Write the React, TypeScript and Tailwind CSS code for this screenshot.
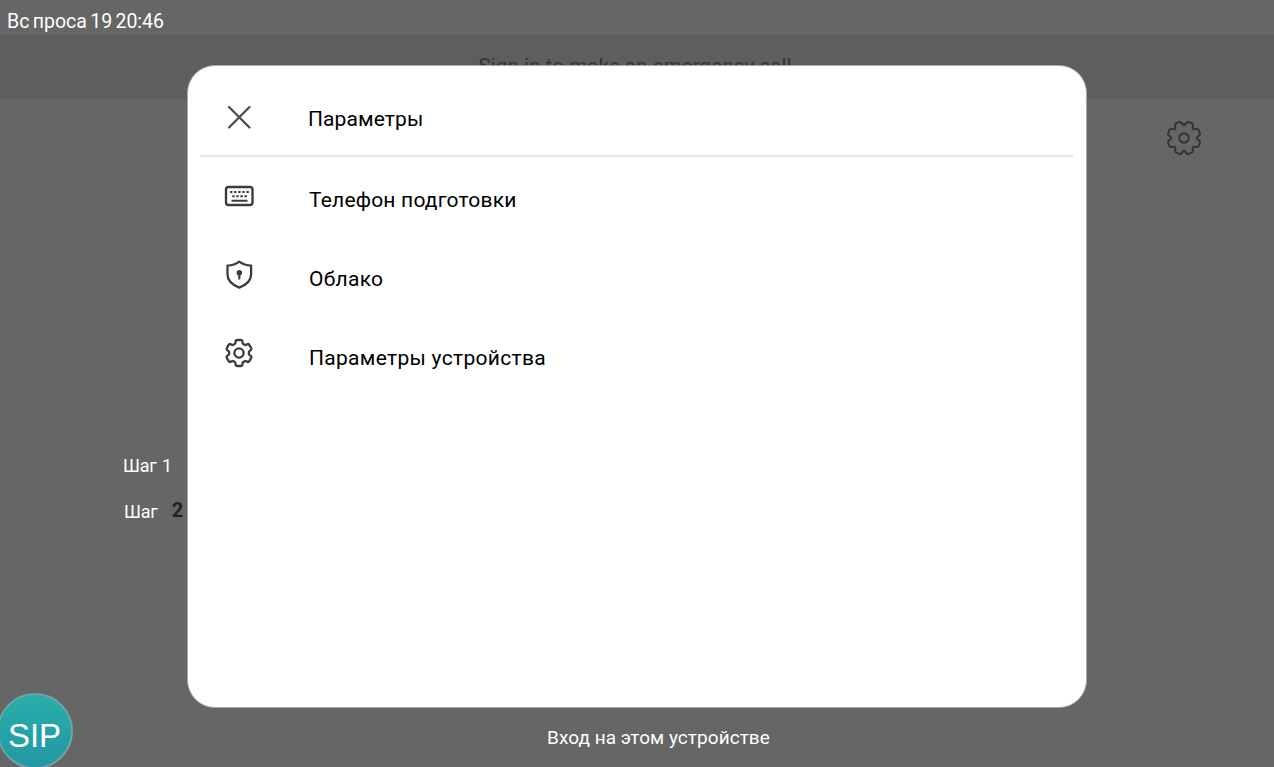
import type { ReactNode } from 'react';

interface GearProps {
  className: string;
  teeth: number;
  outer: number;
  inner: number;
  hole: number;
  // half widths of a tooth at its tip and at its root, in degrees
  tip: number;
  root: number;
  offset?: number;
  strokeWidth: number;
}

function gearPath({ teeth, outer, inner, tip, root, offset = 0 }: GearProps) {
  const points: number[][] = [];
  for (let i = 0; i < teeth; i++) {
    const mid = (360 / teeth) * i + offset - 90;
    [[-root, inner], [-tip, outer], [tip, outer], [root, inner]].forEach(([d, r]) => {
      const a = ((mid + d) * Math.PI) / 180;
      points.push([r * Math.cos(a), r * Math.sin(a)]);
    });
  }
  // soften every corner with a short curve
  const k = 0.26;
  return points
    .map((p, i) => {
      const prev = points[(i + points.length - 1) % points.length];
      const next = points[(i + 1) % points.length];
      const ax = p[0] + (prev[0] - p[0]) * k;
      const ay = p[1] + (prev[1] - p[1]) * k;
      const bx = p[0] + (next[0] - p[0]) * k;
      const by = p[1] + (next[1] - p[1]) * k;
      return `${i === 0 ? 'M' : 'L'}${ax} ${ay}Q${p[0]} ${p[1]} ${bx} ${by}`;
    })
    .join('') + 'Z';
}

function Gear(props: GearProps) {
  return (
    <svg viewBox="-18 -18 36 36" className={props.className} fill="none" stroke="currentColor" strokeWidth={props.strokeWidth} strokeLinejoin="round">
      <path d={gearPath(props)} />
      <circle r={props.hole} />
    </svg>
  );
}

function CloseIcon() {
  return (
    <svg viewBox="0 0 36 36" className="size-9" fill="none" stroke="currentColor" strokeWidth="2.4" strokeLinecap="round">
      <path d="M8 8l20.5 20.5M28.5 8L8 28.5" />
    </svg>
  );
}

function KeyboardIcon() {
  return (
    <svg viewBox="0 0 36 36" className="size-9" fill="none" stroke="currentColor">
      <rect x="5" y="10" width="26.5" height="18" rx="2.5" strokeWidth="2.4" />
      <path d="M9 15h19" strokeWidth="2" strokeDasharray="2.4 1.7" />
      <path d="M11.2 19.3h15" strokeWidth="2" strokeDasharray="2.4 1.7" />
      <path d="M10.5 23.7h16" strokeWidth="2" />
    </svg>
  );
}

function ShieldIcon() {
  return (
    <svg viewBox="0 0 36 36" className="size-9" fill="none" stroke="currentColor" strokeLinejoin="round">
      <path d="M18.3 5.7C15 8.2 11 9.5 6.5 9.7V18.3c0 6.2 4.6 10.6 11.8 13.3C25.5 28.9 30.1 24.5 30.1 18.3V9.7C25.6 9.5 21.6 8.2 18.3 5.7Z" strokeWidth="2.3" />
      <circle cx="18.3" cy="16.8" r="2.8" fill="currentColor" stroke="none" />
      <path d="M18.3 16.5v7" strokeWidth="2.1" />
    </svg>
  );
}

interface MenuItemProps {
  icon: ReactNode;
  label: string;
  labelClass: string;
}

function MenuItem({ icon, label, labelClass }: MenuItemProps) {
  return (
    <button className="flex h-[79px] w-full items-center pl-[33px] text-left">
      <span className="-mt-[3px] text-[#3c3c3c]">{icon}</span>
      <span className={`mt-[7px] ml-[52px] whitespace-nowrap text-[21px] leading-6 ${labelClass}`}>{label}</span>
    </button>
  );
}

function OptionsDialog() {
  return (
    <div className="absolute top-[65px] left-[187px] h-[643px] w-[900px] overflow-hidden rounded-[28px] border border-[#a8a8a8] bg-white text-black">
      <header className="mr-[13px] ml-3 flex h-[91px] items-center border-b-2 border-[#e6e6e6] pt-[14px] pl-[21px]">
        <button className="-mt-px text-[#505050]"><CloseIcon /></button>
        <h1 className="mt-[2px] ml-[51px] text-[21px] leading-6 tracking-[0.1px]">Параметры</h1>
      </header>
      <nav>
        <MenuItem icon={<KeyboardIcon />} label="Телефон подготовки" labelClass="tracking-[0.2px]" />
        <MenuItem icon={<ShieldIcon />} label="Облако" labelClass="tracking-[0.25px]" />
        <MenuItem
          icon={<Gear className="size-9" teeth={6} outer={13.4} inner={10} hole={4.6} tip={14} root={21} strokeWidth={2.3} />}
          label="Параметры устройства"
          labelClass="tracking-[0.3px]"
        />
      </nav>
    </div>
  );
}

export default function App() {
  return (
    <div className="relative flex h-[767px] w-[1274px] flex-col overflow-hidden bg-[#666666] font-['Roboto','Liberation_Sans',sans-serif] text-white">
      <div className="h-[35px] shrink-0 pt-[10px] pl-[7px] text-[19.5px] leading-6 [word-spacing:-1.5px]">Вс проса 19 20:46</div>
      <div className="flex h-16 shrink-0 justify-center bg-[#5e5e5e] pt-[19px] pr-1 text-[20.7px] leading-6 text-[#353535]">
        Sign in to make an emergency call
      </div>
      <div className="flex shrink-0 justify-end pt-[21px] pr-[72px] text-[#343434]">
        <Gear className="size-9" teeth={8} outer={16.8} inner={12.8} hole={4.7} tip={10} root={20} offset={22.5} strokeWidth={2.1} />
      </div>
      <div className="mt-[298px] ml-[123px] flex shrink-0 flex-col gap-[22px] text-[18px] leading-6">
        <div className="tracking-[-0.2px] [word-spacing:1px]">Шаг 1</div>
        <div className="flex pl-px tracking-[-0.2px]">
          <span>Шаг</span>
          <span className="-mt-[2px] ml-[14px] text-[20px] font-bold text-[#222222]">2</span>
        </div>
      </div>
      <div className="mt-[169px] flex shrink-0 items-start">
        <div className="-ml-[3px] flex size-[76px] shrink-0 items-center justify-center rounded-full border-2 border-[#6fa5a6] bg-linear-to-b from-[#2aada8] to-[#2298a5] pt-[10px] pr-px font-['Liberation_Sans',sans-serif] text-[33px]">
          SIP
        </div>
        <p className="mt-[33px] ml-[474px] whitespace-nowrap text-[19px] leading-6 tracking-[0.05px]">Вход на этом устройстве</p>
      </div>
      <OptionsDialog />
    </div>
  );
}
